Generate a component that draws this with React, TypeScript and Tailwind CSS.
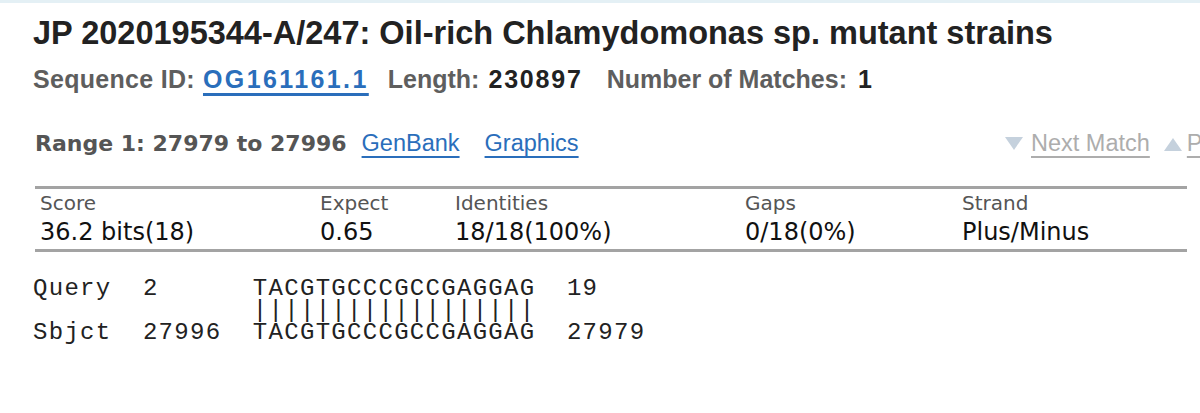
function Tri({ up = false }: { up?: boolean }) {
  return (
    <svg width="18" height="13" viewBox="0 0 18 13" className="self-center shrink-0">
      <path d={up ? 'M9 0L18 13H0Z' : 'M0 0H18L9 13Z'} fill="#c5d1dd" />
    </svg>
  )
}

export default function App() {
  const head = 'text-[20px] leading-[26px] text-[#555] pl-[5px]'
  const val = 'text-[24px] leading-[32px] text-[#111] pl-[5px]'

  return (
    <div className="w-[1200px] h-[413px] bg-white overflow-hidden">
      <div className="h-[3px] bg-[#e4f0f5]" />

      {/* header */}
      <div className="pl-[33px] font-['Liberation_Sans',Arial,sans-serif]">
        <h1 className="mt-[11px] text-[32.5px] leading-[38px] font-bold text-[#222] whitespace-nowrap">
          JP 2020195344-A/247: Oil-rich Chlamydomonas sp. mutant strains
        </h1>
        <div className="mt-[11px] flex items-baseline text-[25px] leading-[32px] font-bold whitespace-nowrap">
          <span className="text-[#5e5e5e] tracking-[0.3px]">Sequence ID:</span>
          <a className="ml-[8px] text-[#2a6ebb] tracking-[2.4px] underline decoration-[3px] underline-offset-[5px]">OG161161.1</a>
          <span className="ml-[19px] text-[#5e5e5e]">Length:</span>
          <span className="ml-[9px] text-[#222] tracking-[1.8px]">230897</span>
          <span className="ml-[24px] text-[#5e5e5e]">Number of Matches:</span>
          <span className="ml-[11px] text-[#222]">1</span>
        </div>
      </div>

      {/* range row */}
      <div className="mt-[31px] flex items-baseline whitespace-nowrap">
        <span className="ml-[35px] font-['DejaVu_Sans',Verdana,sans-serif] font-bold text-[22px] leading-[30px] text-[#555]">
          Range 1: 27979 to 27996
        </span>
        <a className="ml-[15px] font-['Liberation_Sans',Arial,sans-serif] text-[23.5px] text-[#2a6ebb] underline decoration-[2px] underline-offset-[5px]">GenBank</a>
        <a className="ml-[25px] font-['Liberation_Sans',Arial,sans-serif] text-[23.5px] text-[#2a6ebb] underline decoration-[2px] underline-offset-[5px]">Graphics</a>
        <div className="ml-auto w-[195px] shrink-0 flex items-baseline font-['Liberation_Sans',Arial,sans-serif] text-[23.5px]">
          <Tri />
          <a className="ml-[8px] text-[#adadad] underline decoration-[2px] underline-offset-[5px]">Next Match</a>
          <span className="ml-[14px] flex"><Tri up /></span>
          <a className="ml-[5px] text-[#adadad] underline decoration-[2px] underline-offset-[5px]">Previous Match</a>
        </div>
      </div>

      {/* score table */}
      <div className="mt-[25px] ml-[35px] w-[1152px] border-y-[3px] border-[#a3a3a3] font-['DejaVu_Sans',Verdana,sans-serif] grid grid-cols-[280px_135px_290px_217px_1fr] pt-[1px] pb-[1px] whitespace-nowrap">
        <div className={head}>Score</div>
        <div className={head}>Expect</div>
        <div className={head}>Identities</div>
        <div className={head}>Gaps</div>
        <div className={head}>Strand</div>
        <div className={val}>36.2 bits(18)</div>
        <div className={val}>0.65</div>
        <div className={val}>18/18(100%)</div>
        <div className={val}>0/18(0%)</div>
        <div className={val}>Plus/Minus</div>
      </div>

      {/* alignment */}
      <pre className="mt-[26px] ml-[33px] font-['Liberation_Mono','Courier_New',monospace] text-[24px] leading-[22px] tracking-[1.3px] text-[#222]">
{`Query  2      TACGTGCCCGCCGAGGAG  19
              ||||||||||||||||||
Sbjct  27996  TACGTGCCCGCCGAGGAG  27979`}
      </pre>
    </div>
  )
}
